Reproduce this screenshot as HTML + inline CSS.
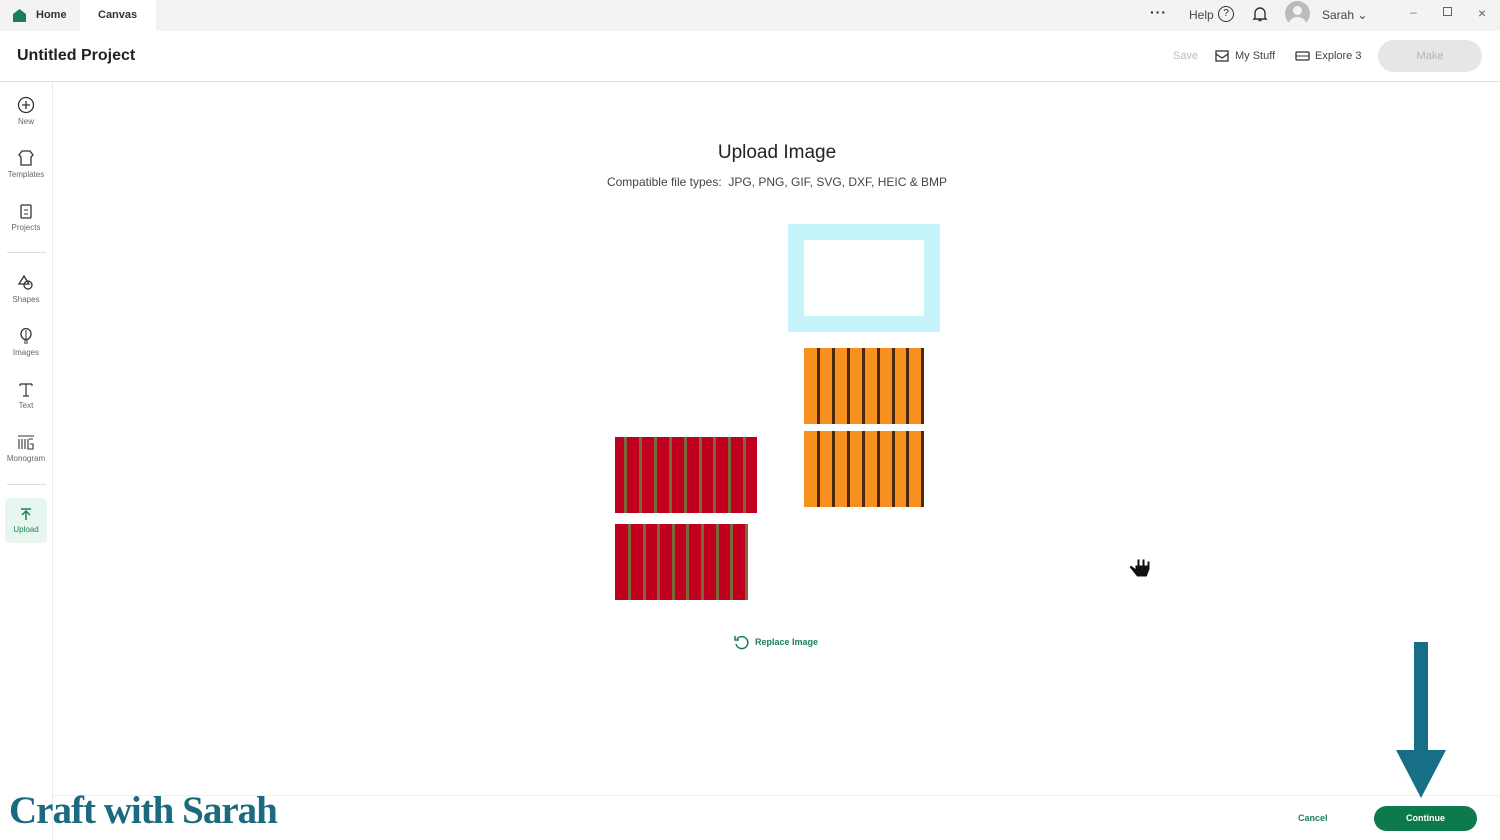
<!DOCTYPE html>
<html><head><meta charset="utf-8"><style>
*{margin:0;padding:0;box-sizing:border-box}
body{width:1500px;height:840px;position:relative;overflow:hidden;background:#fff;font-family:"Liberation Sans",sans-serif;color:#222}
.a{position:absolute}
.top{left:0;top:0;width:1500px;height:31px;background:#f3f3f3}
.side{left:0;top:82px;width:53px;height:758px;border-right:1px solid #ececec}
.si{position:absolute;left:0;width:52px;text-align:center;font-size:8px;color:#666}
.si svg{display:block;margin:0 auto 3px}
.stripe{position:absolute;top:0;bottom:0;width:3px}
</style></head><body>
<div class="a top"></div>
<div class="a" style="left:80px;top:0;width:76px;height:31px;background:#fff"></div>
<svg class="a" style="left:12px;top:8px" width="15" height="15" viewBox="0 0 15 15"><path d="M1 6 L7.5 1 L14 6 V14 H1Z" fill="#1a7f54"/></svg>
<div class="a" style="left:36px;top:9px;font-size:11px;font-weight:bold;color:#333">Home</div>
<div class="a" style="left:98px;top:9px;font-size:11px;font-weight:bold;color:#333">Canvas</div>
<div class="a" style="left:1150px;top:4px;font-size:14px;font-weight:bold;letter-spacing:1px">···</div>
<div class="a" style="left:1189px;top:8px;font-size:12px;color:#444">Help</div>
<div class="a" style="left:1218px;top:6px;width:16px;height:16px;border:1.5px solid #333;border-radius:50%;font-size:10px;text-align:center;line-height:13px">?</div>
<svg class="a" style="left:1252px;top:6px" width="16" height="17" viewBox="0 0 16 17"><path d="M3 12 V7 a5 5 0 0 1 10 0 V12 L14 13 H2Z M6.5 14.5 h3" fill="none" stroke="#333" stroke-width="1.4"/></svg>
<div class="a" style="left:1285px;top:1px;width:25px;height:25px;border-radius:50%;background:#bbb;overflow:hidden"><div class="a" style="left:8px;top:5px;width:9px;height:9px;border-radius:50%;background:#f3f3f3"></div><div class="a" style="left:4px;top:16px;width:17px;height:14px;border-radius:50%;background:#f3f3f3"></div></div>
<div class="a" style="left:1322px;top:8px;font-size:12px;color:#444">Sarah ⌄</div>
<div class="a" style="left:1410px;top:5px;font-size:12px;color:#777">–</div>
<div class="a" style="left:1443px;top:7px;width:9px;height:9px;border:1px solid #666"></div>
<div class="a" style="left:1478px;top:5px;font-size:14px;color:#666">×</div>
<div class="a" style="left:17px;top:47px;font-size:16px;font-weight:bold;color:#222">Untitled Project</div>
<div class="a" style="left:0;top:81px;width:1500px;height:1px;background:#e2e2e2"></div>
<div class="a" style="left:1173px;top:50px;font-size:11px;color:#bbb">Save</div>
<svg class="a" style="left:1215px;top:50px" width="14" height="12"><rect x="1" y="1" width="12" height="10" fill="none" stroke="#333" stroke-width="1.3"/><path d="M1 4 L7 8 L13 4" fill="none" stroke="#333" stroke-width="1.3"/></svg>
<div class="a" style="left:1235px;top:50px;font-size:11px;color:#444">My Stuff</div>
<svg class="a" style="left:1295px;top:51px" width="15" height="10"><rect x="1" y="1" width="13" height="8" rx="1" fill="none" stroke="#333" stroke-width="1.3"/><path d="M1 5 H14" stroke="#333"/></svg>
<div class="a" style="left:1315px;top:50px;font-size:11px;color:#444">Explore 3</div>
<div class="a" style="left:1378px;top:40px;width:104px;height:32px;border-radius:16px;background:#e6e6e6;color:#b5b5b5;font-size:11px;text-align:center;line-height:32px">Make</div>
<div class="a side"></div>
<div class="si" style="top:96px"><svg width="18" height="18"><circle cx="9" cy="9" r="7.5" fill="none" stroke="#333" stroke-width="1.3"/><path d="M9 5v8M5 9h8" stroke="#333" stroke-width="1.3"/></svg>New</div>
<div class="si" style="top:149px"><svg width="18" height="18"><path d="M5 2 L2 6 L4 8 V16 H14 V8 L16 6 L13 2Z" fill="none" stroke="#333" stroke-width="1.3"/></svg>Templates</div>
<div class="si" style="top:202px"><svg width="18" height="18"><rect x="4" y="3" width="10" height="13" rx="1" fill="none" stroke="#333" stroke-width="1.3"/><path d="M7 8h4M7 12h4" stroke="#333"/></svg>Projects</div>
<div class="a" style="left:7px;top:252px;width:39px;height:1px;background:#ddd"></div>
<div class="si" style="top:274px"><svg width="18" height="18"><path d="M7 2 L2 10 H12Z" fill="none" stroke="#333" stroke-width="1.3"/><circle cx="11" cy="11" r="4" fill="none" stroke="#333" stroke-width="1.3"/></svg>Shapes</div>
<div class="si" style="top:327px"><svg width="18" height="18"><ellipse cx="9" cy="7" rx="5" ry="5.5" fill="none" stroke="#333" stroke-width="1.3"/><path d="M7 14h4M7 16h4M9 3v9" stroke="#333"/></svg>Images</div>
<div class="si" style="top:380px"><svg width="18" height="18"><path d="M3 4h12M3 4v2M15 4v2M9 4v12M6 16h6" stroke="#333" stroke-width="1.2" fill="none"/></svg>Text</div>
<div class="si" style="top:433px"><svg width="20" height="18"><path d="M2 3h16M3 6v10M6 6v10M9 6v10M13 6 h4 M12 6 v10 h5 v-5 h-3" stroke="#333" stroke-width="1.1" fill="none"/></svg>Monogram</div>
<div class="a" style="left:7px;top:484px;width:39px;height:1px;background:#ddd"></div>
<div class="a" style="left:5px;top:498px;width:42px;height:45px;border-radius:5px;background:#e8f6f0"></div>
<div class="si" style="top:506px;color:#1a7f54"><svg width="18" height="16"><path d="M4 3h10M9 14V6M5 9l4-4 4 4" stroke="#1a7f54" stroke-width="1.5" fill="none"/></svg>Upload</div>
<div class="a" style="left:0;top:142px;width:1554px;text-align:center;font-size:19px;color:#222">Upload Image</div>
<div class="a" style="left:0;top:175px;width:1554px;text-align:center;font-size:12px;color:#444">Compatible file types:&nbsp; JPG, PNG, GIF, SVG, DXF, HEIC &amp; BMP</div>
<div class="a" style="left:788px;top:224px;width:152px;height:108px;border:16px solid #c6f4fb"></div>
<div class="a" style="left:804px;top:348px;width:120px;height:76px;background:#f7901e" id="o1"></div>
<div class="a" style="left:804px;top:431px;width:120px;height:76px;background:#f7901e" id="o2"></div>
<div class="a" style="left:615px;top:437px;width:142px;height:76px;background:#c1001f" id="r1"></div>
<div class="a" style="left:615px;top:524px;width:131px;height:76px;background:#c1001f" id="r2"></div>
<script>
function s(id,start,step,n,c){var e=document.getElementById(id);for(var i=0;i<n;i++){var d=document.createElement('div');d.className='stripe';d.style.left=(start+i*step)+'px';d.style.background=c;e.appendChild(d);}}
s('o1',13,14.9,8,'#4a2a0c');s('o2',13,14.9,8,'#4a2a0c');
s('r1',9,14.9,9,'#7a6a3a');s('r2',13,14.6,9,'#7a6a3a');
</script>
<svg class="a" style="left:733px;top:634px" width="17" height="16"><path d="M4 5 A6 6 0 1 1 3 10" fill="none" stroke="#1a7f54" stroke-width="1.5"/><path d="M2 2v4h4" fill="none" stroke="#1a7f54" stroke-width="1.5"/></svg>
<div class="a" style="left:755px;top:637px;font-size:9px;font-weight:bold;color:#1a7f54">Replace Image</div>
<svg class="a" style="left:1125px;top:548px" width="30" height="36" viewBox="0 0 30 36"><path d="M10 2 v18 l-4-3 -2 2 8 10 h10 l3-8 v-8 h-3 v4 h-2 v-6 h-3 v6 h-2 v-6 h-3 v6 h-1 V2Z" fill="#111" stroke="#fff" stroke-width="1"/></svg>
<div class="a" style="left:53px;top:795px;width:1447px;height:1px;background:#eee"></div>
<div class="a" style="left:1298px;top:813px;font-size:9px;font-weight:bold;color:#1a7f54">Cancel</div>
<div class="a" style="left:1374px;top:806px;width:103px;height:25px;border-radius:13px;background:#0d7a4c;color:#fff;font-size:9px;font-weight:bold;text-align:center;line-height:25px">Continue</div>
<svg class="a" style="left:1394px;top:640px" width="54" height="160"><rect x="20" y="2" width="14" height="110" fill="#166f86"/><path d="M2 110 H52 L27 158Z" fill="#166f86"/></svg>
<div class="a" style="left:9px;top:788px;font-family:'Liberation Serif',serif;font-weight:bold;font-size:39px;color:#1b6a80;letter-spacing:-1px">Craft with Sarah</div>
</body></html>
